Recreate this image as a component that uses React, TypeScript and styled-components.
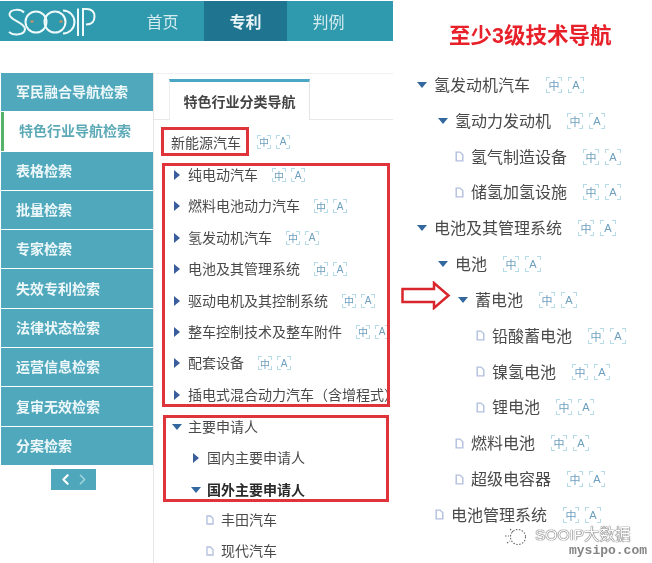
import React from "react";
import styled, { createGlobalStyle } from "styled-components";
import { ChevronLeft, ChevronRight } from "lucide-react";

const GlobalStyle = createGlobalStyle`
    html, body {
        margin: 0;
        background: #ffffff;
    }
    body {
        font-family: "Liberation Sans", "Noto Sans CJK SC", sans-serif;
    }
`

const Page = styled.div`
    position: relative;
    width: 652px;
    height: 563px;
    overflow: hidden;
    display: grid;
    grid-template-columns: 393px 259px;
    filter: blur(0.55px);
`

const LeftColumn = styled.div`
    display: flex;
    flex-direction: column;
    padding-top: 1px;
`

const Header = styled.div`
    height: 40px;
    flex: none;
    background: #2f9aae;
    display: flex;
    padding-left: 8px;
`

const LogoMark = styled.svg`
    width: 90px;
    height: 30px;
    margin-top: 6px;
    margin-right: 23px;
    flex: none;
`

const NavItem = styled.div<{ $active?: boolean }>`
    width: 83px;
    display: flex;
    align-items: center;
    justify-content: center;
    font-size: 16px;
    color: ${(p) => (p.$active ? "#e8f4f6" : "#d3ebef")};
    font-weight: ${(p) => (p.$active ? "bold" : "normal")};
    background: ${(p) => (p.$active ? "#1f7590" : "transparent")};
`

const Body = styled.div`
    flex: 1;
    display: flex;
    margin-top: 32px;
    min-height: 0;
`

const Sidebar = styled.div`
    width: 152px;
    margin-left: 1px;
    flex: none;
    display: flex;
    flex-direction: column;
`

const SideList = styled.div`
    width: 100%;
    display: flex;
    flex-direction: column;
    gap: 1px;
`

const SideItem = styled.div<{ $active?: boolean }>`
    height: 38.3px;
    box-sizing: border-box;
    display: flex;
    align-items: center;
    font-size: 14px;
    font-weight: bold;
    padding-bottom: 2px;
    padding-left: 15px;
    color: ${(p) => (p.$active ? "#5ca9b6" : "#eef8fa")};
    background: ${(p) => (p.$active ? "#ffffff" : "#50a8bc")};
    border-left: ${(p) => (p.$active ? "3px solid #56b26a" : "none")};
`

const Pager = styled.div`
    width: 45px;
    height: 21px;
    margin: 4px 0 0 50px;
    background: #4fa7bb;
    display: flex;
    align-items: center;
    justify-content: center;
    color: #ffffff;
`

const Content = styled.div`
    flex: 1;
    border-left: 1px solid #e6e6e6;
    border-top: 1px solid #f0f0f0;
    display: flex;
    flex-direction: column;
    min-width: 0;
`

const TabStrip = styled.div`
    height: 41px;
    margin-top: 5px;
    padding-left: 15px;
    flex: none;
    border-bottom: 1px solid #e8e8e8;
    box-sizing: border-box;
    display: flex;
`

const Tab = styled.div`
    width: 141px;
    height: 41px;
    box-sizing: border-box;
    border-top: 3px solid #4ba6c6;
    border-left: 1px solid #eeeeee;
    border-right: 1px solid #e4e4e4;
    background: #ffffff;
    display: flex;
    align-items: center;
    justify-content: center;
    font-size: 14px;
    font-weight: bold;
    color: #444444;
`

const TitleLine = styled.div`
    display: flex;
    align-items: center;
    margin: 7px 0 0 7px;
`

const TitleBox = styled.div`
    width: 88px;
    height: 29px;
    box-sizing: border-box;
    border: 3px solid #e0343c;
    padding-left: 7px;
    display: flex;
    align-items: center;
    font-size: 14px;
    color: #4a4a4a;
    white-space: nowrap;
`

const RedBox = styled.div<{ $left: number; $width: number; $top: number }>`
    box-sizing: border-box;
    width: ${(p) => p.$width}px;
    margin: ${(p) => p.$top}px 0 0 ${(p) => p.$left}px;
    border: 3px solid #e0343c;
    display: flex;
    flex-direction: column;
    gap: 13.4px;
    overflow: hidden;
`

const LooseList = styled.div`
    display: flex;
    flex-direction: column;
    gap: 13.4px;
    margin-top: 9px;
`

const Row = styled.div<{ $indent: number; $large?: boolean; $bold?: boolean }>`
    display: flex;
    align-items: center;
    flex: none;
    height: ${(p) => (p.$large ? "20px" : "18px")};
    padding-left: ${(p) => p.$indent}px;
    gap: ${(p) => (p.$large ? "7px" : "6px")};
    font-size: ${(p) => (p.$large ? "16px" : "14px")};
    font-weight: ${(p) => (p.$bold ? "bold" : "normal")};
    color: ${(p) => (p.$bold ? "#2a2a2a" : "#4a4a4a")};
    white-space: nowrap;
`

const Label = styled.span`
    margin-bottom: 2px;
`

const Marker = styled.span`
    width: 10px;
    flex: none;
    display: flex;
    align-items: center;
    justify-content: center;
`

const Caret = styled.span<{ $open?: boolean }>`
    width: 0;
    height: 0;
    border-style: solid;
    border-color: transparent;
    ${(p) =>
        p.$open
            ? `border-width: 6px 5px 0 5px; border-top-color: #33689f;`
            : `border-width: 5px 0 5px 6px; border-left-color: #3a5d9c;`}
`

const Badges = styled.span<{ $large?: boolean }>`
    display: flex;
    flex: none;
    gap: ${(p) => (p.$large ? "6px" : "5px")};
    margin-left: ${(p) => (p.$large ? "9px" : "8px")};
`

const corner = (x: string, y: string) =>
    `linear-gradient(#b5dbe9, #b5dbe9) ${x} ${y} / 4px 1px no-repeat, linear-gradient(#b5dbe9, #b5dbe9) ${x} ${y} / 1px 4px no-repeat`

const Badge = styled.span<{ $large?: boolean }>`
    width: ${(p) => (p.$large ? "16px" : "14px")};
    height: ${(p) => (p.$large ? "16px" : "14px")};
    display: flex;
    align-items: center;
    justify-content: center;
    font-size: ${(p) => (p.$large ? "11px" : "10px")};
    color: #6d9fbe;
    background: ${corner("left", "top")}, ${corner("right", "top")}, ${corner("left", "bottom")}, ${corner("right", "bottom")};
`

const RightColumn = styled.div`
    display: flex;
    flex-direction: column;
`

const Heading = styled.div`
    margin: 23px 0 0 56px;
    height: 26px;
    line-height: 26px;
    font-size: 21.5px;
    font-weight: bold;
    color: #e8202a;
    white-space: nowrap;
`

const RightTree = styled.div`
    margin-top: 26px;
    display: flex;
    flex-direction: column;
    gap: 15.83px;
`

const PointerArrow = styled.svg`
    position: absolute;
    left: 401px;
    top: 281px;
    width: 50px;
    height: 29px;
`

const Watermark = styled.div`
    position: absolute;
    left: 503px;
    top: 525px;
    width: 149px;
    height: 36px;
`

const WatermarkIcon = styled.svg`
    position: absolute;
    left: 0;
    top: 2px;
    width: 26px;
    height: 20px;
`

const WatermarkName = styled.div`
    position: absolute;
    left: 32px;
    top: 1px;
    font-size: 15.5px;
    line-height: 18px;
    color: #ffffff;
    white-space: nowrap;
    text-shadow: 0 0 1px #333333, 0 0 1px #333333;
`

const WatermarkSite = styled.div`
    position: absolute;
    left: 66px;
    top: 18px;
    font-family: "Liberation Mono", monospace;
    font-size: 13px;
    line-height: 16px;
    font-weight: bold;
    color: #858585;
    white-space: nowrap;
`

type Kind = "closed" | "open" | "file"

interface TreeNode {
    label: string
    kind: Kind
    indent: number
    bold?: boolean
    plain?: boolean
}

const navItems = ["首页", "专利", "判例"]

const sideItems = [
    "军民融合导航检索",
    "特色行业导航检索",
    "表格检索",
    "批量检索",
    "专家检索",
    "失效专利检索",
    "法律状态检索",
    "运营信息检索",
    "复审无效检索",
    "分案检索",
]

const industries: TreeNode[] = [
    { label: "纯电动汽车", kind: "closed", indent: 7 },
    { label: "燃料电池动力汽车", kind: "closed", indent: 7 },
    { label: "氢发动机汽车", kind: "closed", indent: 7 },
    { label: "电池及其管理系统", kind: "closed", indent: 7 },
    { label: "驱动电机及其控制系统", kind: "closed", indent: 7 },
    { label: "整车控制技术及整车附件", kind: "closed", indent: 7 },
    { label: "配套设备", kind: "closed", indent: 7 },
    { label: "插电式混合动力汽车（含增程式）", kind: "closed", indent: 7, plain: true },
]

const applicants: TreeNode[] = [
    { label: "主要申请人", kind: "open", indent: 6, plain: true },
    { label: "国内主要申请人", kind: "closed", indent: 25, plain: true },
    { label: "国外主要申请人", kind: "open", indent: 25, bold: true, plain: true },
]

const foreign: TreeNode[] = [
    { label: "丰田汽车", kind: "file", indent: 51, plain: true },
    { label: "现代汽车", kind: "file", indent: 51, plain: true },
]

const techTree: TreeNode[] = [
    { label: "氢发动机汽车", kind: "open", indent: 24 },
    { label: "氢动力发动机", kind: "open", indent: 45 },
    { label: "氢气制造设备", kind: "file", indent: 61 },
    { label: "储氢加氢设施", kind: "file", indent: 61 },
    { label: "电池及其管理系统", kind: "open", indent: 24 },
    { label: "电池", kind: "open", indent: 45 },
    { label: "蓄电池", kind: "open", indent: 65 },
    { label: "铅酸蓄电池", kind: "file", indent: 82 },
    { label: "镍氢电池", kind: "file", indent: 82 },
    { label: "锂电池", kind: "file", indent: 82 },
    { label: "燃料电池", kind: "file", indent: 61 },
    { label: "超级电容器", kind: "file", indent: 61 },
    { label: "电池管理系统", kind: "file", indent: 41 },
]

const FileIcon = ({ large }: { large?: boolean }) => (
    <svg width={large ? 9 : 8} height={large ? 11 : 10} viewBox="0 0 8 10" fill="none" stroke="#b3bfde" strokeWidth="1.3">
        <path d="M1 1h3.500L7 3.500V9H1z" />
    </svg>
)

const BadgePair = ({ large }: { large?: boolean }) => (
    <Badges $large={large}>
        <Badge $large={large}>中</Badge>
        <Badge $large={large}>A</Badge>
    </Badges>
)

const TreeRow = ({ node, large }: { node: TreeNode; large?: boolean }) => (
    <Row $indent={node.indent} $large={large} $bold={node.bold}>
        <Marker>
            {node.kind === "file" ? <FileIcon large={large} /> : <Caret $open={node.kind === "open"} />}
        </Marker>
        <Label>{node.label}</Label>
        {!node.plain && <BadgePair large={large} />}
    </Row>
)

const Logo = () => (
    <LogoMark viewBox="0 0 90 30" fill="none" stroke="#eef9fa" strokeWidth="2" role="img" aria-label="SOOIP">
        <path d="M16 5.500C13 2 2.500 1.500 1.500 7c-1 6 15.500 8 15.500 15 0 6-11.500 7-16 3" />
        <circle cx="28" cy="15" r="10.500" />
        <circle cx="47" cy="15" r="10.500" />
        <path d="M55 3.500a11.500 11.500 0 0 1 0 23" />
        <path d="M70 1.500V29" />
        <path d="M75 29V2h3.500c6 0 8 3.500 8 7.500 0 5-3 8-8.500 8" />
        <path d="M22.500 14.500h3M51.500 14.500h3" stroke="#d9905f" />
    </LogoMark>
)

export default function App() {
    return (
        <>
            <GlobalStyle />
            <Page>
                <LeftColumn>
                    <Header>
                        <Logo />
                        {navItems.map((item) => (
                            <NavItem key={item} $active={item === "专利"}>{item}</NavItem>
                        ))}
                    </Header>
                    <Body>
                        <Sidebar>
                            <SideList>
                                {sideItems.map((item) => (
                                    <SideItem key={item} $active={item === "特色行业导航检索"}>{item}</SideItem>
                                ))}
                            </SideList>
                            <Pager>
                                <ChevronLeft size={17} strokeWidth={3} />
                                <ChevronRight size={17} strokeWidth={2} color="#a9d5df" />
                            </Pager>
                        </Sidebar>
                        <Content>
                            <TabStrip>
                                <Tab>特色行业分类导航</Tab>
                            </TabStrip>
                            <TitleLine>
                                <TitleBox>新能源汽车</TitleBox>
                                <BadgePair />
                            </TitleLine>
                            <RedBox $left={8} $width={228} $top={7}>
                                {industries.map((node) => (
                                    <TreeRow key={node.label} node={node} />
                                ))}
                            </RedBox>
                            <RedBox $left={9} $width={226} $top={8}>
                                {applicants.map((node) => (
                                    <TreeRow key={node.label} node={node} />
                                ))}
                            </RedBox>
                            <LooseList>
                                {foreign.map((node) => (
                                    <TreeRow key={node.label} node={node} />
                                ))}
                            </LooseList>
                        </Content>
                    </Body>
                </LeftColumn>
                <RightColumn>
                    <Heading>至少3级技术导航</Heading>
                    <RightTree>
                        {techTree.map((node) => (
                            <TreeRow key={node.label + node.indent} node={node} large />
                        ))}
                    </RightTree>
                </RightColumn>
                <PointerArrow viewBox="0 0 50 29" fill="#ffffff" stroke="#d8262c" strokeWidth="2.5">
                    <path d="M1.500 8H33V2L47.500 14.500 33 27V21H1.500z" />
                </PointerArrow>
                <Watermark>
                    <WatermarkIcon viewBox="0 0 26 20" fill="none" stroke="#666666" strokeWidth="1.1" strokeDasharray="1.500 1.500">
                        <circle cx="15" cy="10" r="7.500" />
                        <path d="M7 2l3 3M2 9h4M4 16l3-2" />
                    </WatermarkIcon>
                    <WatermarkName>SOOIP大数据</WatermarkName>
                    <WatermarkSite>mysipo.com</WatermarkSite>
                </Watermark>
            </Page>
        </>
    )
}
